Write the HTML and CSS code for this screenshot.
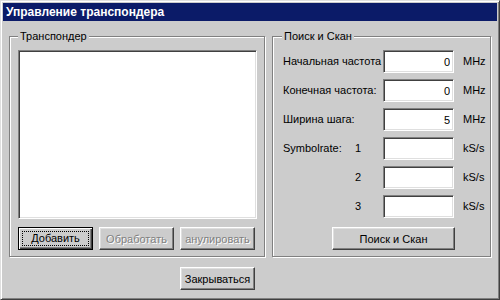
FILE: index.html
```html
<!DOCTYPE html>
<html>
<head>
    <title>Управление транспондера</title>
    <link rel="stylesheet" href="styles.css">
</head>
<body>
    <div class="window">
        <div class="titlebar">Управление транспондера</div>

        <div class="content">
            <div class="group group-left">
                <div class="caption">Транспондер</div>
                <div class="listbox"></div>
                <div class="button-row">
                    <button class="btn btn-default"><span class="focus">Добавить</span></button>
                    <button class="btn" disabled>Обработать</button>
                    <button class="btn" disabled>анулировать</button>
                </div>
            </div>

            <div class="group group-right">
                <div class="caption">Поиск и Скан</div>
                <div class="fields">
                    <div class="label">Начальная частота</div>
                    <input class="field" type="text" value="0">
                    <div class="unit">MHz</div>

                    <div class="label">Конечная частота:</div>
                    <input class="field" type="text" value="0">
                    <div class="unit">MHz</div>

                    <div class="label">Ширина шага:</div>
                    <input class="field" type="text" value="5">
                    <div class="unit">MHz</div>

                    <div class="label"><span class="sr-name">Symbolrate:</span>1</div>
                    <input class="field" type="text" value="">
                    <div class="unit">kS/s</div>

                    <div class="label"><span class="sr-name"></span>2</div>
                    <input class="field" type="text" value="">
                    <div class="unit">kS/s</div>

                    <div class="label"><span class="sr-name"></span>3</div>
                    <input class="field" type="text" value="">
                    <div class="unit">kS/s</div>
                </div>
                <button class="btn btn-scan">Поиск и Скан</button>
            </div>
        </div>

        <div class="footer">
            <button class="btn">Закрываться</button>
        </div>
    </div>
</body>
</html>
```

FILE: styles.css
```css
:root {
    --face: #cccccc;
    --shadow: #808080;
    --dark: #404040;
    --light: #dfdfdf;
    --title: #0b1b68;
}

* {
    margin: 0;
    padding: 0;
    box-sizing: border-box;
}

body {
    font-family: 'Liberation Sans', Arial, sans-serif;
    font-size: 11px;
    color: #000;
    background-color: var(--face);
}

.window {
    width: 500px;
    height: 300px;
    padding: 2px;
    background-color: var(--face);
    border: 1px solid;
    border-color: var(--light) var(--dark) var(--dark) var(--light);
    box-shadow: inset 1px 1px #fff, inset -1px -1px var(--shadow);
    display: flex;
    flex-direction: column;
}

.titlebar {
    height: 18px;
    line-height: 18px;
    padding-left: 3px;
    background-color: var(--title);
    color: #fff;
    font-size: 12px;
    font-weight: bold;
}

.content {
    display: flex;
    gap: 7px;
    padding: 15px 6px 0 6px;
}

/* etched group frame */
.group {
    height: 221px;
    border: 1px solid var(--shadow);
    box-shadow: inset 1px 1px #fff, 1px 1px #fff;
    display: flex;
    flex-direction: column;
}

.group-left {
    width: 256px;
    padding: 0 7px 0 8px;
}

.group-right {
    width: 219px;
    padding: 0 8px 0 10px;
}

.caption {
    width: fit-content;
    height: 14px;
    line-height: 14px;
    margin: -8px 0 0 -1px;
    padding: 0 2px;
    background-color: var(--face);
}

.group-left .caption {
    margin-left: 0;
}

.listbox {
    height: 169px;
    margin-top: 7px;
    background-color: #fff;
    border: 1px solid;
    border-color: var(--shadow) #fff #fff var(--shadow);
    box-shadow: inset 1px 1px var(--dark), inset -1px -1px var(--light);
}

.button-row {
    display: flex;
    gap: 6px;
    margin-top: 8px;
}

.btn {
    width: 75px;
    height: 23px;
    font-family: inherit;
    font-size: 11px;
    color: #000;
    background-color: var(--face);
    border: 1px solid;
    border-color: #fff var(--dark) var(--dark) #fff;
    box-shadow: inset -1px -1px var(--shadow), inset 1px 1px var(--light);
    white-space: nowrap;
    overflow: hidden;
}

.btn:disabled {
    color: var(--shadow);
    text-shadow: 1px 1px #fff;
}

.btn-default {
    border-color: #000;
    box-shadow: inset 1px 1px #fff, inset -1px -1px var(--dark), inset -2px -2px var(--shadow);
    padding: 3px;
}

.focus {
    display: block;
    height: 100%;
    line-height: 13px;
    border: 1px dotted #000;
}

.fields {
    display: grid;
    grid-template-columns: 100px 71px auto;
    grid-auto-rows: 23px;
    row-gap: 6px;
    margin-top: 7px;
}

.label,
.unit {
    line-height: 23px;
    white-space: nowrap;
}

.unit {
    padding-left: 9px;
}

.sr-name {
    display: inline-block;
    width: 72px;
}

.field {
    width: 71px;
    height: 23px;
    padding-right: 3px;
    font-family: inherit;
    font-size: 11px;
    text-align: right;
    background-color: #fff;
    border: 1px solid;
    border-color: var(--shadow) #fff #fff var(--shadow);
    box-shadow: inset 1px 1px var(--dark), inset -1px -1px var(--light);
    outline: none;
}

.btn-scan {
    width: 123px;
    margin: 9px 0 0 49px;
}

.footer {
    padding: 10px 0 0 177px;
}
```
